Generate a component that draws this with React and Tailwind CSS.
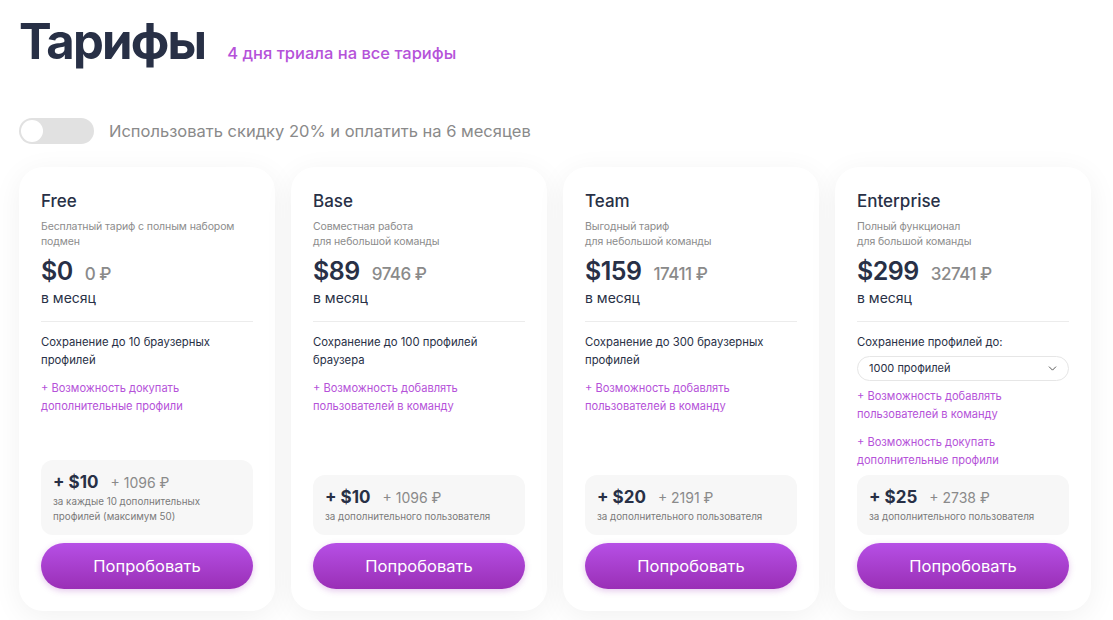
import React from 'react'

const plans = [
    {
        name: "Free",
        desc: ["Бесплатный тариф с полным набором", "подмен"],
        usd: "$0",
        rub: "0 ₽",
        feature: "Сохранение до 10 браузерных профилей",
        extras: ["+ Возможность докупать дополнительные профили"],
        addon: { usd: "+ $10", rub: "+ 1096 ₽", note: "за каждые 10 дополнительных профилей (максимум 50)" },
    },
    {
        name: "Base",
        desc: ["Совместная работа", "для небольшой команды"],
        usd: "$89",
        rub: "9746 ₽",
        feature: "Сохранение до 100 профилей браузера",
        extras: ["+ Возможность добавлять пользователей в команду"],
        addon: { usd: "+ $10", rub: "+ 1096 ₽", note: "за дополнительного пользователя" },
    },
    {
        name: "Team",
        desc: ["Выгодный тариф", "для небольшой команды"],
        usd: "$159",
        rub: "17411 ₽",
        feature: "Сохранение до 300 браузерных профилей",
        extras: ["+ Возможность добавлять пользователей в команду"],
        addon: { usd: "+ $20", rub: "+ 2191 ₽", note: "за дополнительного пользователя" },
    },
    {
        name: "Enterprise",
        desc: ["Полный функционал", "для большой команды"],
        usd: "$299",
        rub: "32741 ₽",
        feature: "Сохранение профилей до:",
        select: "1000 профилей",
        extras: ["+ Возможность добавлять пользователей в команду", "+ Возможность докупать дополнительные профили"],
        addon: { usd: "+ $25", rub: "+ 2738 ₽", note: "за дополнительного пользователя" },
    },
]

function PlanCard({ plan }) {
    return (
        <div className="flex flex-col h-[444px] rounded-[24px] bg-white shadow-[0_6px_30px_rgba(0,0,0,0.06)] px-[22px] pt-[23px] pb-[22px]">

            <div className="text-[17px] leading-[22px] font-medium text-[#283046]">{plan.name}</div>

            <div className="mt-[7px] text-[10.5px] leading-[15px] text-[#8c8c8c] tracking-[-0.1px]">
                {plan.desc.map((line, key) => (
                    <div key={'desc'+key}>{line}</div>
                ))}
            </div>

            <div className="mt-[5px] flex items-baseline gap-[12px] h-[34px]">
                <span className="text-[25px] leading-[34px] font-semibold text-[#283046] tracking-[-0.5px]">{plan.usd}</span>
                <span className="text-[17px] font-medium text-[#8a8a8a] tracking-[-0.5px]">{plan.rub}</span>
            </div>
            <div className="text-[14px] leading-[20px] text-[#283046]">в месяц</div>

            <div className="mt-[13px] border-t border-[#ececec]" />

            <div className="mt-[11px] text-[11.3px] leading-[18px] text-[#283046]">{plan.feature}</div>

            {plan.select &&
                <div className="mt-[5px] h-[25px] rounded-full border border-[#e6e6e6] flex items-center justify-between pl-[11px] pr-[9px]">
                    <span className="text-[11px] text-[#283046]">{plan.select}</span>
                    <svg width="13" height="13" viewBox="0 0 24 24" fill="none" stroke="#555" strokeWidth="1.8" strokeLinecap="round" strokeLinejoin="round">
                        <path d="M6 9l6 6 6-6" />
                    </svg>
                </div>
            }

            {plan.extras.map((text, key) => (
                <div key={'extra'+key} className={(key > 0 ? "mt-[10px] " : plan.select ? "mt-[6px] " : "mt-[10px] ") + "text-[11.1px] leading-[18px] text-[#b552d9]"}>{text}</div>
            ))}

            <div className="mt-auto rounded-[12px] bg-[#f7f7f7] px-[12px] pt-[11px] pb-[11px]">
                <div className="flex items-baseline gap-[12px]">
                    <span className="text-[17px] leading-[22px] font-bold text-[#283046]">{plan.addon.usd}</span>
                    <span className="text-[14px] text-[#8a8a8a]">{plan.addon.rub}</span>
                </div>
                <div className="mt-[1px] text-[9.8px] leading-[15px] text-[#7a7a7a]">{plan.addon.note}</div>
            </div>

            <button className="mt-[8px] h-[46px] w-full rounded-full bg-gradient-to-b from-[#b64fe6] to-[#9a2fb6] text-white text-[16.5px] shadow-[0_2px_6px_rgba(150,40,180,0.25)]">
                Попробовать
            </button>
        </div>
    )
}

export default function App() {
    return (
        <div className="min-h-[620px] bg-white pl-[19px] pr-[22px] pt-[8px]" style={{ fontFamily: "Inter, 'Noto Sans', sans-serif" }}>

            <div className="flex items-baseline gap-[22px]">
                <h1 className="text-[49px] leading-[68px] font-bold text-[#283046] tracking-[-1.8px]">Тарифы</h1>
                <span className="text-[16.5px] font-medium text-[#b552d9]">4 дня триала на все тарифы</span>
            </div>

            <div className="mt-[42px] flex items-center gap-[15px]">
                <div className="w-[75px] h-[26px] rounded-full bg-[#e1e1e1] flex items-center px-[2px]">
                    <div className="w-[22px] h-[22px] rounded-full bg-white" />
                </div>
                <span className="text-[16.5px] text-[#8a8a8a]">Использовать скидку 20% и оплатить на 6 месяцев</span>
            </div>

            <div className="mt-[23px] grid grid-cols-4 gap-[16px]">
                {plans.map((plan, key) => (
                    <PlanCard key={'plan'+key} plan={plan} />
                ))}
            </div>

        </div>
    )
}
